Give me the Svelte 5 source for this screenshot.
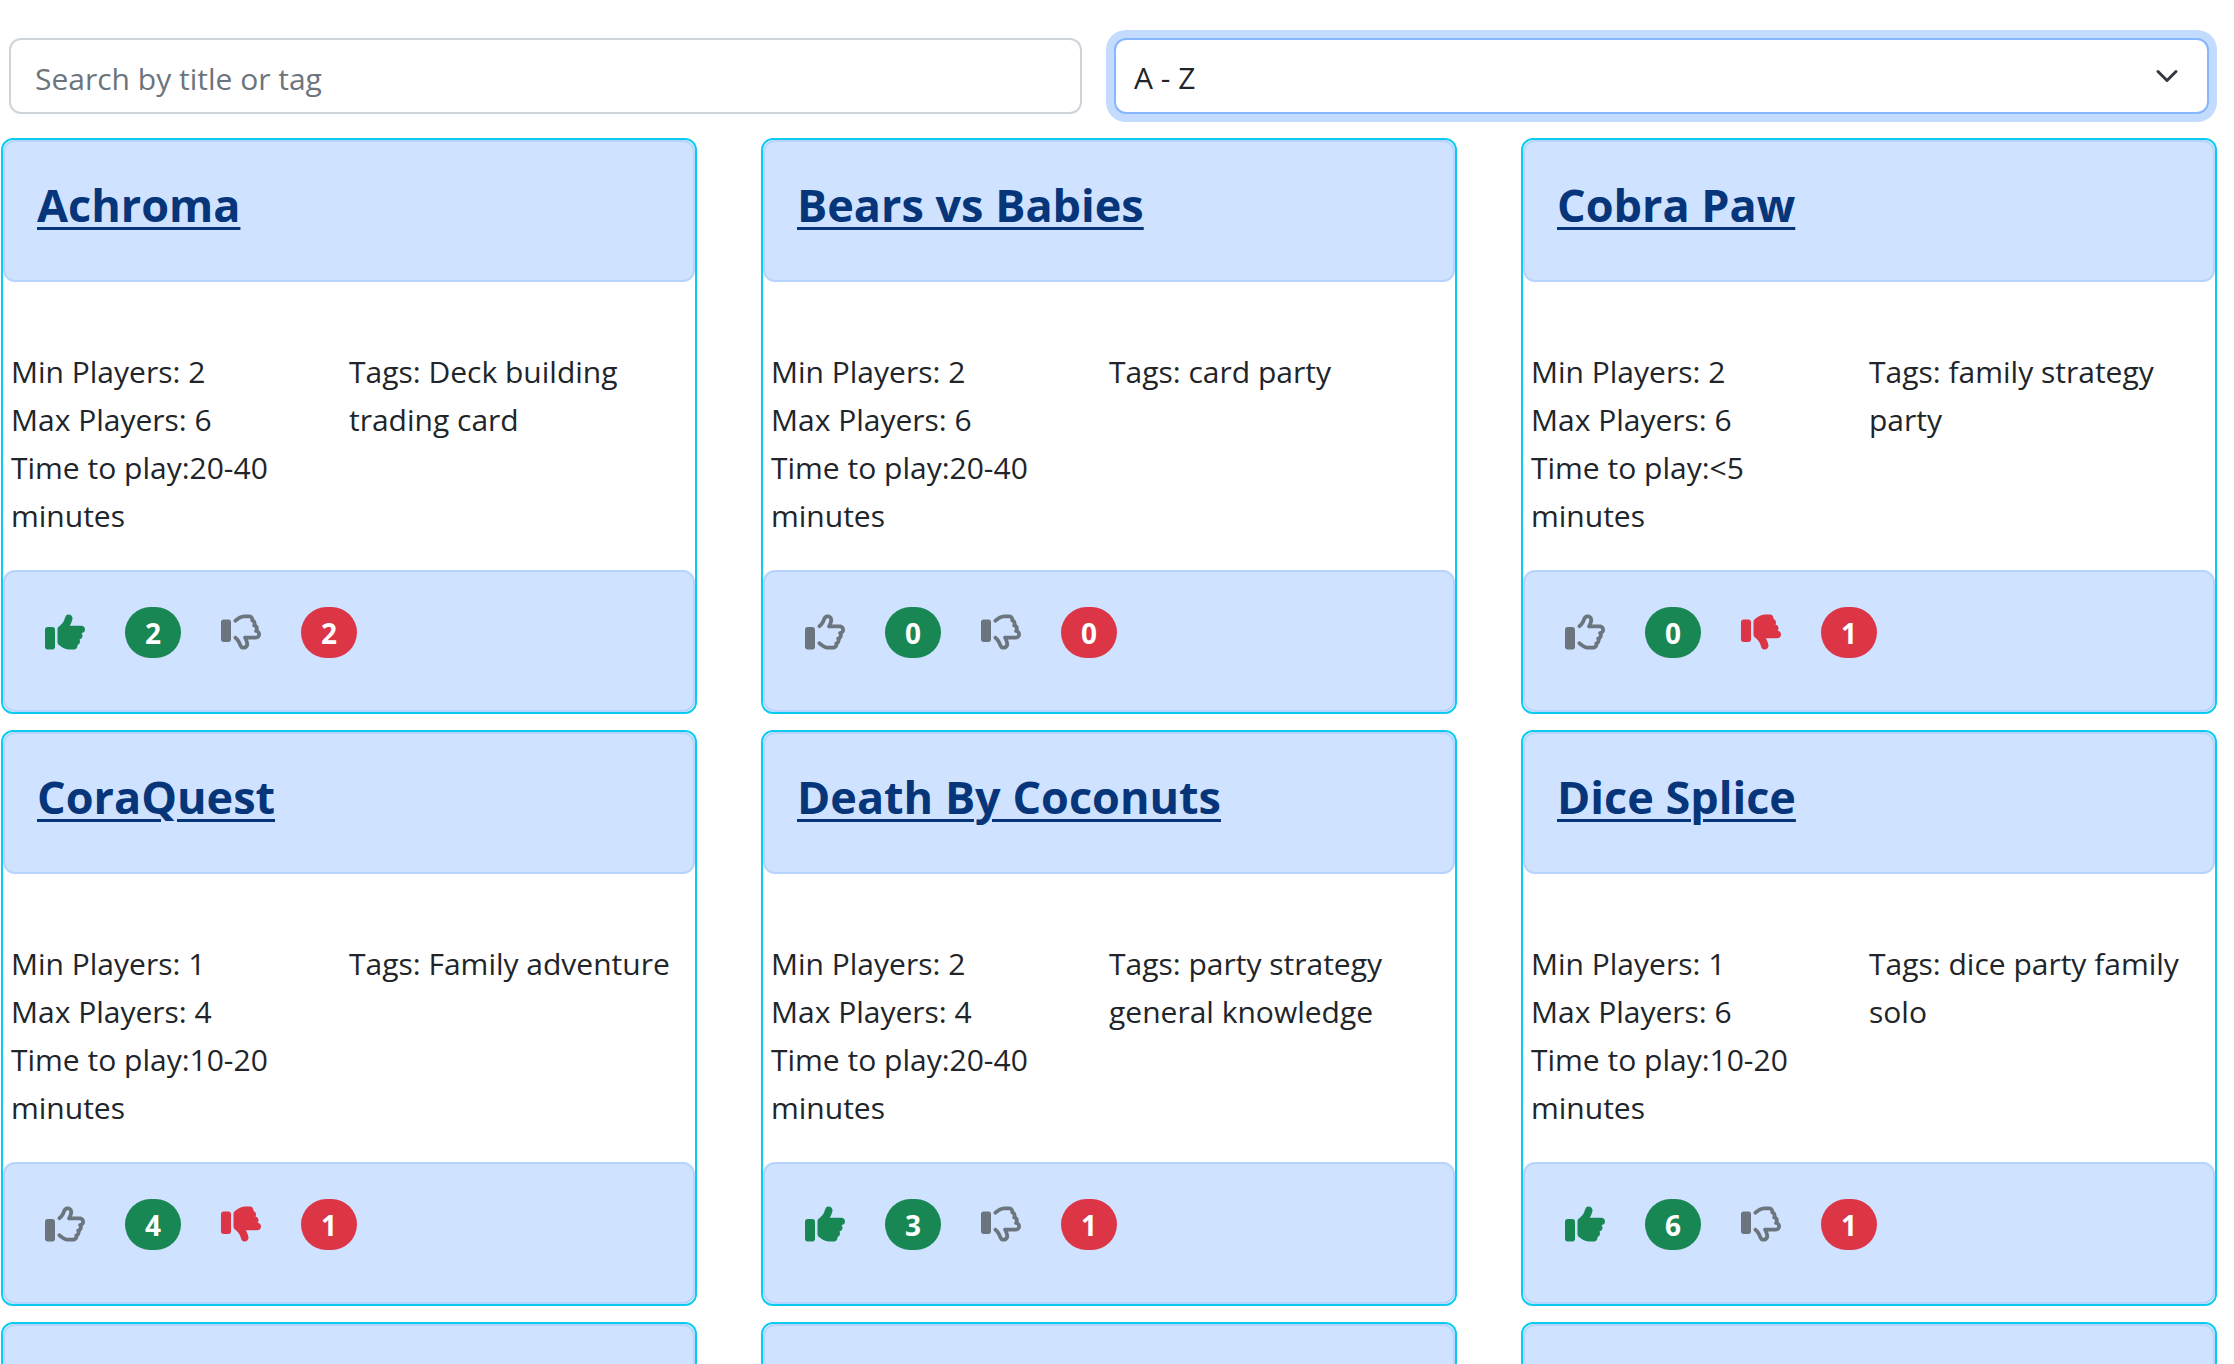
<script>
  const games = [
    { title: 'Achroma', min: 2, max: 6, time: '20-40', tags: 'Deck building trading card', likes: 2, dislikes: 2, vote: 'up' },
    { title: 'Bears vs Babies', min: 2, max: 6, time: '20-40', tags: 'card party', likes: 0, dislikes: 0, vote: '' },
    { title: 'Cobra Paw', min: 2, max: 6, time: '<5', tags: 'family strategy party', likes: 0, dislikes: 1, vote: 'down' },
    { title: 'CoraQuest', min: 1, max: 4, time: '10-20', tags: 'Family adventure', likes: 4, dislikes: 1, vote: 'down' },
    { title: 'Death By Coconuts', min: 2, max: 4, time: '20-40', tags: 'party strategy general knowledge', likes: 3, dislikes: 1, vote: 'up' },
    { title: 'Dice Splice', min: 1, max: 6, time: '10-20', tags: 'dice party family solo', likes: 6, dislikes: 1, vote: 'up' }
  ];
  const loading = [1, 2, 3];

  const cuff = 'M96 192H32c-17.67 0-32 14.33-32 32v224c0 17.67 14.33 32 32 32h64c17.67 0 32-14.33 32-32V224C128 206.3 113.7 192 96 192z';
  const handSolid = 'M512 224.1c0-26.5-21.48-47.98-48-47.98h-146.5c22.77-37.91 34.52-80.88 34.52-96.02C352 56.52 333.5 32 302.5 32c-63.13 0-26.36 76.15-108.2 141.6L178 186.6C166.2 196.1 160.2 210 160.1 224L160 384c0 15.1 7.113 29.33 19.2 38.39l34.14 25.59C241 468.8 274.7 480 309.3 480H368c26.52 0 48-21.47 48-47.98c0-3.635-.4805-7.143-1.246-10.55C434 415.2 448 397.4 448 376c0-9.148-2.697-17.61-7.139-24.88C463.1 347 480 327.5 480 304.1c0-12.5-4.893-23.78-12.72-32.32C492.2 270.1 512 249.5 512 224.1z';
  const handOutline = 'M512 227c0-36.89-30.05-66.92-66.97-66.92h-99.86C354.7 135.1 360 113.5 360 100.8c0-33.8-26.2-68.78-70.06-68.78c-46.61 0-59.36 32.44-69.61 58.5c-31.66 80.5-60.33 66.39-60.33 93.47c0 12.84 10.36 23.99 24.02 23.99c5.256 0 10.55-1.721 14.97-5.26c76.76-61.37 57.97-122.7 90.95-122.7c16.08 0 22.06 12.75 22.06 20.79c0 7.404-7.594 39.55-25.55 71.59c-2.046 3.646-3.066 7.686-3.066 11.72c0 13.92 11.43 23.1 24 23.1h137.6C455.5 208.1 464 216.6 464 227c0 9.809-7.766 18.03-17.67 18.71c-12.66 .8593-22.36 11.4-22.36 23.94c0 15.47 11.39 15.95 11.39 28.91c0 25.37-35.03 12.34-35.03 42.15c0 11.22 6.392 13.03 6.392 22.25c0 22.66-29.77 13.76-29.77 40.64c0 4.515 1.11 5.961 1.11 9.456c0 10.45-8.516 18.95-18.97 18.95h-52.53c-25.62 0-51.02-8.466-71.5-23.81l-36.66-27.51c-4.315-3.245-9.37-4.811-14.38-4.811c-13.85 0-24.03 11.38-24.03 24.04c0 7.287 3.312 14.42 9.596 19.13l36.67 27.52C235 468.1 270.6 480 306.6 480h52.53c35.33 0 64.36-27.49 66.8-62.2c17.77-12.23 28.83-32.51 28.83-54.83c0-3.046-.2187-6.107-.6406-9.122c17.84-12.15 29.28-32.58 29.28-55.28c0-5.311-.6406-10.54-1.875-15.64C499.9 270.1 512 250.2 512 227z';
</script>

<main class="page">
  <form class="filters">
    <input class="control" type="search" placeholder="Search by title or tag" aria-label="Search by title or tag" />
    <select class="control select" aria-label="Sort games">
      <option>A - Z</option>
      <option>Z - A</option>
    </select>
  </form>

  <div class="grid">
    {#each games as game}
      <article class="card">
        <header class="panel">
          <h2 class="title"><a href="#game">{game.title}</a></h2>
        </header>
        <div class="details">
          <div class="facts">
            <p>Min Players: {game.min}</p>
            <p>Max Players: {game.max}</p>
            <p>Time to play:{game.time} minutes</p>
          </div>
          <p>Tags: {game.tags}</p>
        </div>
        <footer class="panel votes">
          <button type="button" class="vote" class:liked={game.vote === 'up'} aria-label="Like">
            <svg viewBox="0 0 512 512" aria-hidden="true">
              <path d={cuff} />
              <path d={game.vote === 'up' ? handSolid : handOutline} />
            </svg>
          </button>
          <span class="badge green">{game.likes}</span>
          <button type="button" class="vote" class:disliked={game.vote === 'down'} aria-label="Dislike">
            <svg viewBox="0 0 512 512" aria-hidden="true">
              <path d={cuff} transform="translate(0 -96)" />
              <path d={game.vote === 'down' ? handSolid : handOutline} transform="matrix(1 0 0 -1 0 512)" />
            </svg>
          </button>
          <span class="badge red">{game.dislikes}</span>
        </footer>
      </article>
    {/each}
    {#each loading as slot (slot)}
      <article class="card">
        <div class="panel"></div>
      </article>
    {/each}
  </div>
</main>

<style>
  :global(body) {
    margin: 0;
    background: #fff;
  }
  .page {
    box-sizing: border-box;
    height: 100vh;
    overflow: hidden;
    padding-top: 38px;
    color: #212529;
    font-family: 'Segoe UI', 'Open Sans', 'Noto Sans', sans-serif;
    font-size: 30px;
    line-height: 48px;
  }
  .filters {
    display: grid;
    grid-template-columns: 49fr 50fr;
    gap: 32px;
    padding: 0 25px 0 9px;
    margin-bottom: 24px;
  }
  .control {
    appearance: none;
    box-sizing: border-box;
    width: 100%;
    height: 76px;
    margin: 0;
    padding: 4px 24px 0;
    border: 2px solid #ced4da;
    border-radius: 12px;
    background-color: #fff;
    color: #212529;
    font: inherit;
    outline: 0;
  }
  .control::placeholder {
    color: #6c757d;
    opacity: 1;
  }
  .select {
    padding: 4px 72px 0 18px;
    border-color: #86b7fe;
    box-shadow: 0 0 0 8px #c2dbfe;
    background-image: url("data:image/svg+xml,%3csvg xmlns='http://www.w3.org/2000/svg' viewBox='0 0 16 16'%3e%3cpath fill='none' stroke='%23343a40' stroke-linecap='round' stroke-linejoin='round' stroke-width='2' d='m2 5 6 6 6-6'/%3e%3c/svg%3e");
    background-repeat: no-repeat;
    background-position: right 24px center;
    background-size: 32px 24px;
  }
  .grid {
    display: grid;
    grid-template-columns: repeat(3, 1fr);
    gap: 16px 64px;
    padding: 0 17px 0 1px;
  }
  .card {
    border: 2px solid #0dcaf0;
    border-radius: 12px;
  }
  .panel {
    box-sizing: border-box;
    min-height: 142px;
    padding: 34px 32px 30px;
    border: 2px solid #b6d4fe;
    border-radius: 12px;
    background: #cfe2ff;
  }
  .title {
    margin: 0;
    font-size: 45px;
    line-height: 58px;
    font-weight: 700;
  }
  .title a {
    color: #06357a;
    text-decoration-thickness: 3px;
    text-underline-offset: 5px;
  }
  .details {
    display: grid;
    grid-template-columns: 1fr 1fr;
    padding: 66px 8px 30px;
  }
  .facts {
    padding-right: 16px;
  }
  p {
    margin: 0;
  }
  .votes {
    display: flex;
    align-items: center;
    gap: 40px;
    padding: 0 40px 18px;
  }
  .vote {
    width: 40px;
    height: 40px;
    padding: 0;
    border: 0;
    background: none;
    color: #6c757d;
  }
  .vote svg {
    display: block;
    width: 100%;
    height: 100%;
    fill: currentColor;
  }
  .liked {
    color: #198754;
  }
  .disliked {
    color: #dc3545;
  }
  .badge {
    box-sizing: border-box;
    min-width: 56px;
    padding: 2px 19px 1px;
    border-radius: 26px;
    color: #fff;
    font-size: 28px;
    font-weight: 700;
    text-align: center;
  }
  .green {
    background: #198754;
  }
  .red {
    background: #dc3545;
  }
</style>
